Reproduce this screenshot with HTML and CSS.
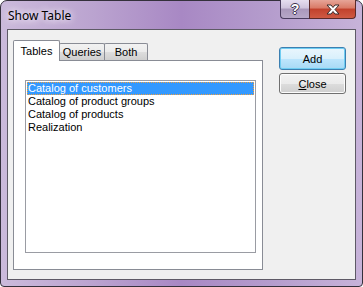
FILE: index.html
```
<!DOCTYPE html>
<html lang="en">
<head>
  <meta charset="UTF-8" />
  <title>Show Table</title>
  <link rel="stylesheet" href="styles.css">
</head>
<body>
  <div class="window">
    <div class="titlebar">
      <span class="title">Show Table</span>
      <div class="caption-buttons">
        <div class="cap-btn help">?</div>
        <div class="cap-btn close">
          <svg width="16" height="11" viewBox="0 0 16 11">
            <path d="M2 1 L6 1 L8 3.5 L10 1 L14 1 L10 5.5 L14 10 L10 10 L8 7.5 L6 10 L2 10 L6 5.5 Z" fill="#fff" stroke="#3a2a2a" stroke-width="1" stroke-linejoin="round"/>
          </svg>
        </div>
      </div>
    </div>

    <div class="client">
      <div class="tabs">
        <div class="tab-strip">
          <div class="tab active">Tables</div>
          <div class="tab queries">Queries</div>
          <div class="tab both">Both</div>
        </div>
        <div class="tab-panel">
          <ul class="listbox">
            <li class="selected">Catalog of customers</li>
            <li>Catalog of product groups</li>
            <li>Catalog of products</li>
            <li>Realization</li>
          </ul>
        </div>
      </div>

      <div class="actions">
        <button class="btn default">Add</button>
        <button class="btn close-btn"><u>C</u>lose</button>
      </div>
    </div>
  </div>
</body>
</html>
```

FILE: styles.css
```
*, *::before, *::after { box-sizing: border-box; }

body {
  margin: 0;
  background: #ffffff;
  font-family: 'Liberation Sans', Arial, sans-serif;
}

.window {
  width: 363px;
  height: 287px;
  border: 1px solid #34303c;
  border-radius: 7px 7px 4px 4px;
  background: linear-gradient(90deg, #cbbadb 0%, #bba4d0 25%, #a888c4 50%, #b59dcd 75%, #c7b3d9 100%);
  padding: 0 6px 6px 6px;
  display: flex;
  flex-direction: column;
}

.titlebar {
  height: 28px;
  display: flex;
  justify-content: space-between;
  align-items: flex-start;
}

.title {
  font-family: 'Noto Sans', 'DejaVu Sans', sans-serif;
  font-size: 12px;
  color: #000;
  margin: 6px 0 0 1px;
  text-shadow: 0 0 6px #f4eefa, 0 0 8px #f4eefa;
}

.caption-buttons {
  display: flex;
  margin-top: -1px;
}

.cap-btn {
  height: 19px;
  border: 1px solid #4a3d5e;
  border-top: none;
  display: flex;
  align-items: center;
  justify-content: center;
}

.cap-btn.help {
  width: 29px;
  border-radius: 0 0 0 4px;
  background: linear-gradient(180deg, #e6def0 0%, #cfc3dd 45%, #a998bb 50%, #b7a8c8 100%);
  color: #fff;
  font-weight: bold;
  font-size: 14px;
  text-shadow: -1px 0 #3f3550, 1px 0 #3f3550, 0 -1px #3f3550, 0 1px #3f3550;
  border-right: none;
}

.cap-btn.close {
  width: 47px;
  border-radius: 0 0 4px 0;
  background: linear-gradient(180deg, #e6a598 0%, #d97a66 45%, #c1412c 50%, #cf5a44 100%);
  border-color: #5a2a2a;
}

.client {
  flex: 1;
  border: 1px solid #5e5a66;
  background: #f0f0f0;
  display: flex;
  padding: 10px 0 0 5px;
}

.tabs {
  width: 250px;
  display: flex;
  flex-direction: column;
}

.tab-strip {
  height: 20px;
  display: flex;
  align-items: flex-end;
}

.tab {
  font-size: 11px;
  color: #000;
  text-align: center;
  border: 1px solid #898c95;
  border-bottom: none;
  border-radius: 2px 2px 0 0;
}

.tab.active {
  width: 47px;
  height: 21px;
  margin-bottom: -1px;
  padding-top: 4px;
  background: #ffffff;
  position: relative;
  z-index: 1;
}

.tab.queries {
  width: 46px;
  height: 17px;
  margin-left: -1px;
  padding-top: 2px;
  background: linear-gradient(180deg, #f2f2f2 0%, #ebebeb 50%, #dddddd 51%, #cfcfcf 100%);
}

.tab.both {
  width: 44px;
  height: 17px;
  margin-left: -1px;
  padding-top: 2px;
  background: linear-gradient(180deg, #f2f2f2 0%, #ebebeb 50%, #dddddd 51%, #cfcfcf 100%);
}

.tab-panel {
  height: 210px;
  border: 1px solid #898c95;
  background: #ffffff;
  padding: 19px 0 0 11px;
}

.listbox {
  list-style: none;
  margin: 0;
  width: 231px;
  height: 173px;
  border: 1px solid #9a9ca3;
  background: #ffffff;
  padding: 1px;
}

.listbox li {
  height: 13px;
  line-height: 13px;
  font-size: 11px;
  padding-left: 1px;
  color: #000;
  white-space: nowrap;
}

.listbox li.selected {
  background: #3399ff;
  color: #ffffff;
  outline: 1px dotted #f0a040;
  outline-offset: -1px;
}

.actions {
  margin-left: 16px;
  margin-top: 7px;
  display: flex;
  flex-direction: column;
}

.btn {
  width: 67px;
  font-family: 'Liberation Sans', Arial, sans-serif;
  font-size: 11px;
  color: #000;
  padding: 0;
  border-radius: 3px;
  cursor: pointer;
}

.btn.default {
  height: 23px;
  border: 1px solid #3c7fb1;
  background: linear-gradient(180deg, #eaf6fd 0%, #d9f0fc 50%, #bee6fd 51%, #a7d9f5 100%);
  box-shadow: inset 0 0 0 1px #6fcdf2;
}

.btn.close-btn {
  height: 21px;
  margin-top: 3px;
  border: 1px solid #707070;
  background: linear-gradient(180deg, #f2f2f2 0%, #ebebeb 50%, #dddddd 51%, #cfcfcf 100%);
  box-shadow: inset 0 0 0 1px #fcfcfc;
}
```
